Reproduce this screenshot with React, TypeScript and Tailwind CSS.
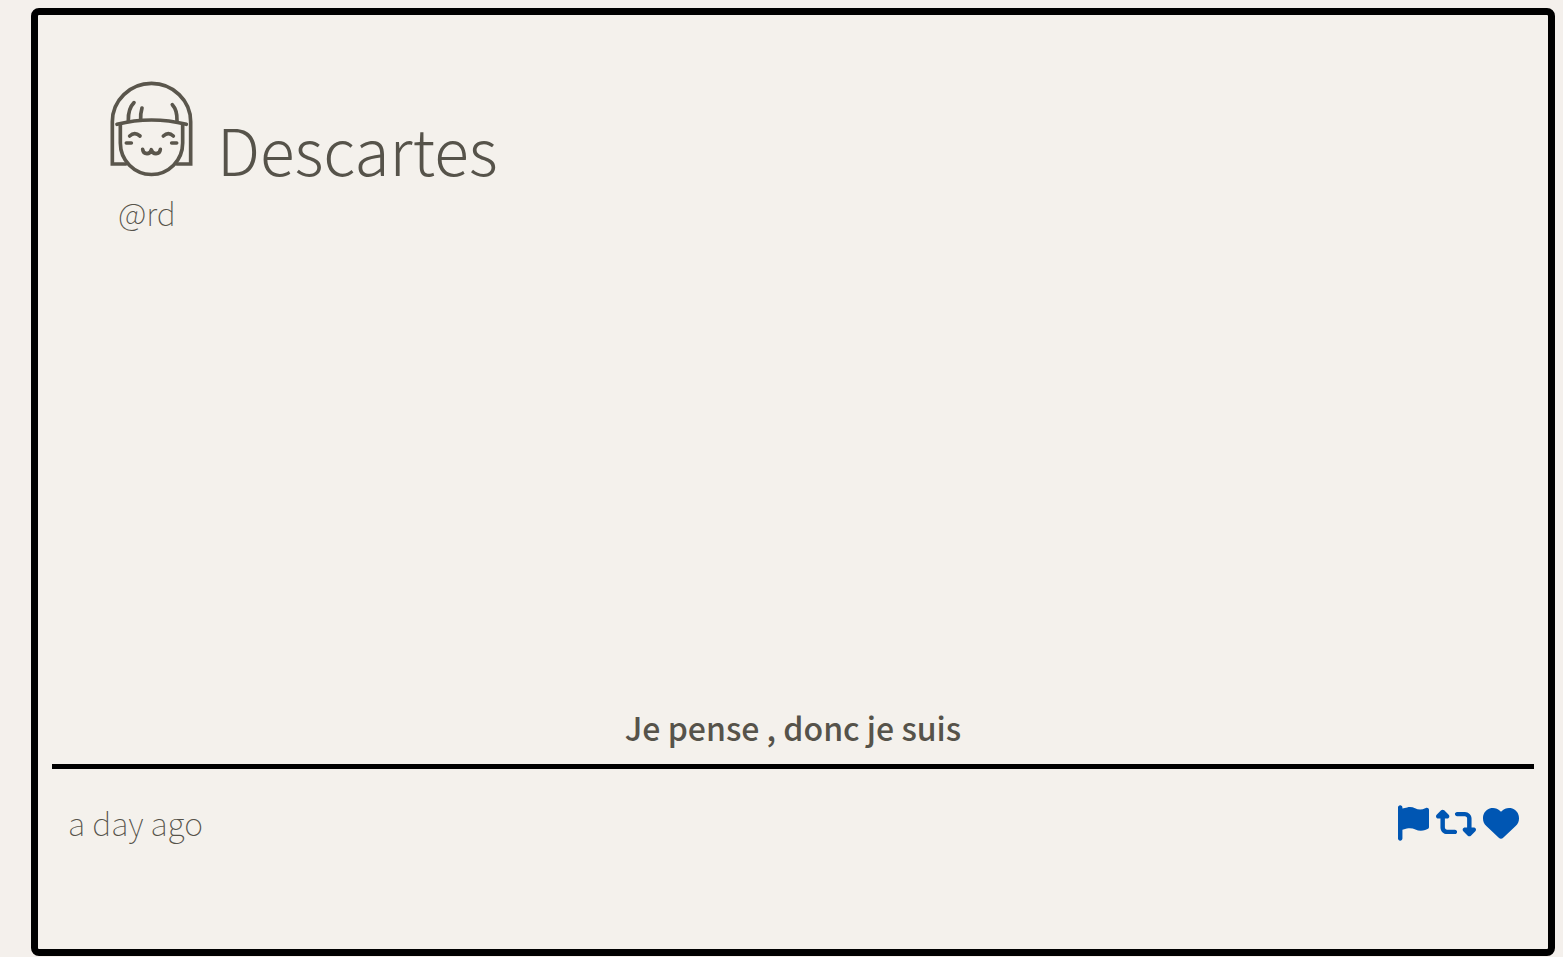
import { FaFlag, FaHeart, FaRetweet } from "react-icons/fa6";

function Avatar() {
  return (
    <svg
      viewBox="60 33 249 288"
      className="h-24 w-[83px]"
      fill="none"
      stroke="#5a564c"
      strokeWidth="11"
      strokeLinecap="round"
      role="img"
      aria-label="Descartes"
    >
      <path strokeLinejoin="miter" d="M108 282H67V155A117.500 115 0 0 1 302 155V282H260" />
      <path d="M81 163Q184 137 289 163" />
      <path d="M91 163V219A93 94 0 0 0 278 219V163" />
      <path d="M115 152Q114 116 132 98M152 148Q151 132 156 114M261 152Q262 120 247 104" />
      <path d="M119 198Q134 184 150 198M220 198Q235 184 250 198" />
      <path d="M109 219H124M245 219H260" />
      <path
        strokeLinejoin="round"
        d="M158 238C159 247 164 251 171 251C178 251 182 246 184 239C186 246 191 251 198 251C205 251 210 247 211 238"
      />
    </svg>
  );
}

export default function App() {
  return (
    <main className="flex min-h-screen flex-col bg-[#f4f0ec] pt-2 pr-2 pb-px pl-[31px] font-['Noto_Sans_CJK_SC',sans-serif] text-[#56534a]">
      <article className="flex flex-1 flex-col rounded-lg border-[7px] border-black bg-[#f4f1ec] px-3.5">
        <header className="flex-1 px-[58px] pt-[66px]">
          <div className="flex items-end gap-6">
            <Avatar />
            <h1 className="text-[64px] leading-[58px] font-light">Descartes</h1>
          </div>
          <p className="mt-4 pl-2 text-[32px] leading-[38px] font-thin">@rd</p>
        </header>
        <p className="border-b-[5px] border-black pb-[18px] text-center text-[32px] leading-[38px] font-medium">
          Je pense , donc je suis
        </p>
        <footer className="flex items-start justify-between pt-[34px] pr-[15px] pb-[108px] pl-4">
          <time className="text-[32px] leading-[38px] font-thin">a day ago</time>
          <div className="flex items-center gap-[7px] pt-0.5 text-[#0056b3]">
            <button type="button" aria-label="Report">
              <FaFlag className="h-9 w-[31px]" />
            </button>
            <button type="button" aria-label="Repost">
              <FaRetweet className="h-9 w-10" />
            </button>
            <button type="button" aria-label="Like">
              <FaHeart className="h-9 w-9" />
            </button>
          </div>
        </footer>
      </article>
    </main>
  );
}
